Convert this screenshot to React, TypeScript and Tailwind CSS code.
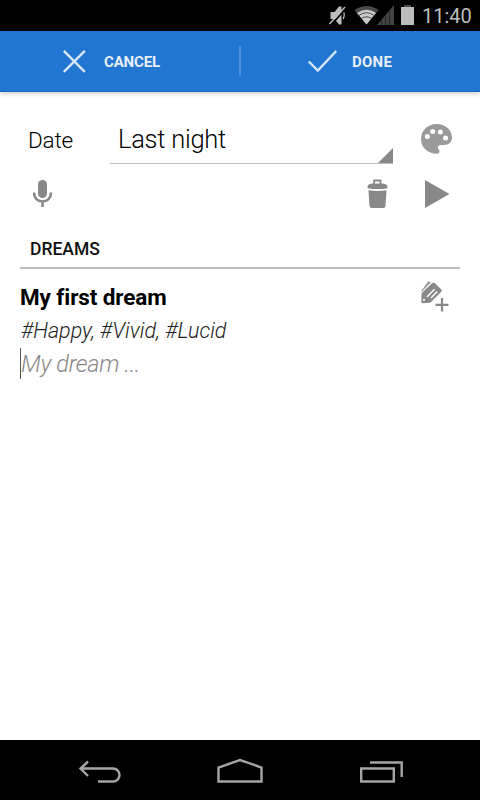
import type { ReactNode } from "react";

interface IActionButtonProps {
    label: string;
    className: string;
    children: ReactNode;
}

function StatusBar() {
    return (
        <div className="h-[31px] bg-black flex items-center justify-end pr-2 shrink-0">
            <svg width="88" height="31" viewBox="329 0 88 31" className="mr-[6px]">
                <path d="M331.500 12h4l4.500-5.500h2.500v18H340l-4.500-5.500h-4z" fill="#bdbdbd" />
                <path d="M344 11q2.500 4 0 8" fill="none" stroke="#bdbdbd" strokeWidth="1.300" />
                <path d="M332 25l15.500-17" stroke="#000" strokeWidth="1.800" />
                <path d="M330.500 24l15.500-17" stroke="#bdbdbd" strokeWidth="1.500" />
                <path d="M367.500 24.500L355.500 10Q367.500 2 379.500 10z" fill="#4a4a4a" />
                <path d="M367.500 24.500l-9.500-11.500Q367.500 6.500 377 13z" fill="#cacaca" />
                <path d="M359.500 15.600Q367.500 9.800 375.500 15.600M362 18.700q5.500-3.800 11 0" fill="none" stroke="#3a3a3a" strokeWidth="0.900" />
                <path d="M378 25L395 5v20z" fill="#444" />
                <path d="M382.500 20v5M386.500 15v10M390.500 11v14" stroke="#262626" strokeWidth="1" />
                <path d="M405 5h7v2h-7z" fill="#4a4a4a" />
                <path d="M402 7h13v18h-13z" fill="#bdbdbd" />
            </svg>
            <span className="text-[20px] leading-[32px] text-[#bdbdbd] w-[50px] whitespace-nowrap pt-px">11:40</span>
        </div>
    );
}

function ActionButton({ label, className, children }: IActionButtonProps) {
    return (
        <button className={`flex items-center h-full text-[15px] font-bold text-[#e9eefa] ${className}`}>
            {children}
            <span className="whitespace-nowrap pt-[2px]">{label}</span>
        </button>
    );
}

function ActionBar() {
    return (
        <div className="h-[61px] bg-[#2076d0] border-b border-[#1468bd] flex items-center shadow-[0_1px_5px_rgba(0,0,0,0.25)] shrink-0">
            <ActionButton label="CANCEL" className="w-[239px] pl-[62px] gap-[17px] tracking-[-0.150px]">
                <svg width="25" height="26" viewBox="0 0 25 26" fill="none" stroke="#d8e7fa" strokeWidth="2.400">
                    <path d="M1.800 2.800l21 21M22.800 2.800l-21 21" />
                </svg>
            </ActionButton>
            <div className="w-[2px] h-[30px] bg-[#4b92dd]" />
            <ActionButton label="DONE" className="flex-1 pl-[66px] gap-[14px] tracking-[0.250px]">
                <svg width="31" height="24" viewBox="0 0 31 24" fill="none" stroke="#d8e7fa" strokeWidth="2.400">
                    <path d="M1.800 12.500l9 9L29.300 2" />
                </svg>
            </ActionButton>
        </div>
    );
}

function EntryHeader() {
    return (
        <div className="pt-6 pl-7">
            <div className="flex h-[48px]">
                <span className="w-[82px] text-[22.500px] leading-[48px] font-light text-black tracking-[-0.200px]">Date</span>
                <div className="relative w-[283px] border-b border-[#bbb] pl-2 text-[25.500px] leading-[46px] font-light text-black whitespace-nowrap tracking-[-0.250px]">
                    Last night
                    <svg width="15" height="15" viewBox="0 0 15 15" className="absolute right-0 bottom-0">
                        <path d="M0 15L15 0v15z" fill="#888" />
                    </svg>
                </div>
                <svg width="31" height="31" viewBox="0 0 31 31" className="ml-[28px] mt-[8px]">
                    <path d="M15.500 0C7 0 0 6.500 0 15s7 14.700 15.500 14.700c2 0 3-1 3-2.300 0-2-1.700-2.400-1.700-4 0-1.500 1.200-2.400 3-2.400h3c5 0 8.200-3 8.200-7.500C31 5.800 24 0 15.500 0z" fill="#999" />
                    <g fill="#fff">
                        <circle cx="6.400" cy="12.500" r="2.500" />
                        <circle cx="11.700" cy="7.500" r="2.500" />
                        <circle cx="19.300" cy="8" r="2.500" />
                        <circle cx="24.500" cy="14" r="2.500" />
                    </g>
                </svg>
            </div>
            <div className="flex items-start h-[54px] pt-[15px]">
                <svg width="20" height="29" viewBox="0 0 20 29" className="ml-[5px]">
                    <rect x="5" y="1" width="9" height="18" rx="4.500" fill="#888" />
                    <path d="M1 13.500c0 5.500 3.700 9 8.500 9s8.500-3.500 8.500-9M9.500 22.500v5.500" fill="none" stroke="#888" strokeWidth="2.600" />
                </svg>
                <svg width="21" height="30" viewBox="0 0 21 30" className="ml-[314px]">
                    <path d="M7 5V1.500h6.500V5" fill="none" stroke="#888" strokeWidth="1.800" />
                    <path d="M0.500 8Q0.500 4.500 6 4.500h8.500q6 0 6 3.500v1.200Q10.500 11 0.500 9.200z" fill="#888" />
                    <path d="M1.500 11.200q9 1.600 18 0l-1 15.800q-.2 2-2.200 2H4.700q-2 0-2.200-2z" fill="#888" />
                </svg>
                <svg width="25" height="30" viewBox="0 0 25 30" className="ml-[37px]">
                    <path d="M0 1v28l24.500-14z" fill="#888" />
                </svg>
            </div>
        </div>
    );
}

function DreamItem() {
    return (
        <div className="flex justify-between pt-[11px]">
            <div className="whitespace-nowrap">
                <h4 className="text-[22.500px] leading-[34px] font-bold text-black tracking-[-0.100px]">My first dream</h4>
                <p className="text-[21.500px] leading-[33px] italic font-light text-[#222] pl-px">#Happy, #Vivid, #Lucid</p>
                <p className="text-[23.500px] leading-[32px] mt-px h-[31px] italic font-light text-[#888] border-l border-[#555] tracking-[-0.300px]">My dream ...</p>
            </div>
            <svg width="29" height="31" viewBox="420 281 29 31" className="mr-[11px] mt-[1px]">
                <path d="M421.300 291l6.700-9.500 3.200.5-9.500 10z" fill="#999" />
                <path d="M421.500 293.300l10.500-10q1.500-1.200 3 0l6.300 6.200q1 1.200 0 2.200L431 302q-.7.800-1.800.8l-6.400.4q-1.500 0-1.500-1.500z" fill="#888" />
                <path d="M427 297l7.500-7.800M431 298l6.200-6.500" stroke="#fff" strokeWidth="1.400" />
                <circle cx="424" cy="299.800" r="1.100" fill="#fff" />
                <path d="M442 298v13.500M435.500 304.800h13" stroke="#888" strokeWidth="2.200" />
            </svg>
        </div>
    );
}

function NavBar() {
    return (
        <div className="h-[60px] bg-black flex items-center shrink-0">
            <svg width="480" height="60" viewBox="0 5 480 60" fill="none" stroke="#a5a5a5" strokeWidth="2.400">
                <path d="M98 46.500h15a6.300 6.300 0 0 0 0-13H81M88 26.500l-7.500 7 7.500 7.500" />
                <path d="M218.500 46.500v-14l21.500-7.500 21.500 7.500v14z" />
                <path d="M361.200 33.500h32.600v13h-32.600zM370 27.500h31.700V42" />
            </svg>
        </div>
    );
}

function App() {
    return (
        <div className="h-screen w-full bg-white flex flex-col overflow-hidden font-[Roboto,sans-serif]">
            <StatusBar />
            <ActionBar />
            <main className="flex-1">
                <EntryHeader />
                <section className="px-5">
                    <h3 className="h-[51px] border-b-2 border-[#bcbcbc] pl-[10px] pt-[21px] text-[17.500px] leading-[20px] font-medium text-[#111]">DREAMS</h3>
                    <DreamItem />
                </section>
            </main>
            <NavBar />
        </div>
    );
}

export default App;
